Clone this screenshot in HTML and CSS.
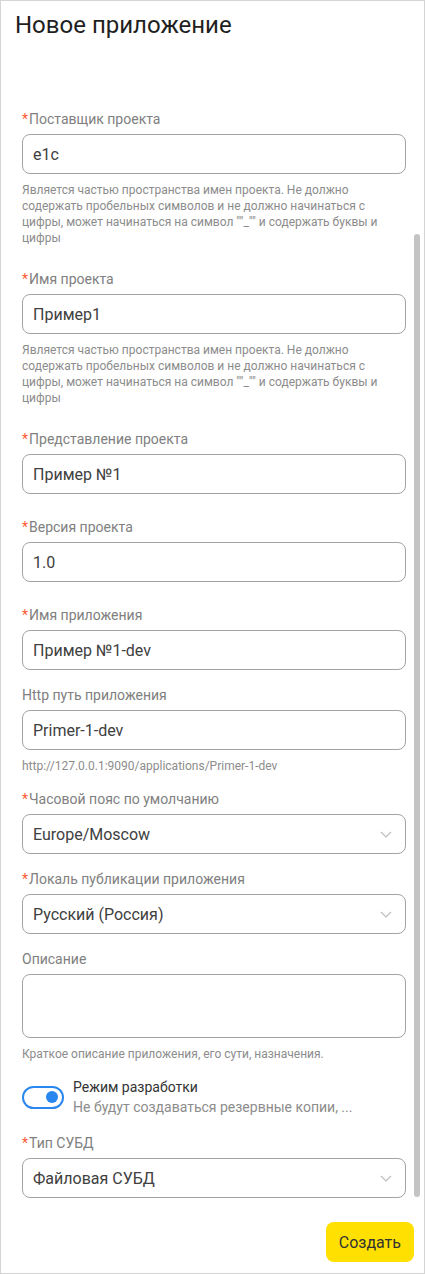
FILE: index.html
```html
<!DOCTYPE html>
<html lang="ru">
<head>
<meta charset="utf-8">
<title>Новое приложение</title>
<link rel="stylesheet" href="styles.css">
</head>
<body>
<div class="dialog">
  <h1 class="title">Новое приложение</h1>
  <div class="main">
    <form class="form">
      <div class="field">
        <div class="label"><span class="req">*</span>Поставщик проекта</div>
        <div class="input">e1c</div>
        <div class="help">Является частью пространства имен проекта. Не должно содержать пробельных символов и не должно начинаться с цифры, может начинаться на символ ""_"" и содержать буквы и цифры</div>
      </div>
      <div class="field">
        <div class="label"><span class="req">*</span>Имя проекта</div>
        <div class="input">Пример1</div>
        <div class="help">Является частью пространства имен проекта. Не должно содержать пробельных символов и не должно начинаться с цифры, может начинаться на символ ""_"" и содержать буквы и цифры</div>
      </div>
      <div class="field">
        <div class="label"><span class="req">*</span>Представление проекта</div>
        <div class="input">Пример №1</div>
      </div>
      <div class="field">
        <div class="label"><span class="req">*</span>Версия проекта</div>
        <div class="input">1.0</div>
      </div>
      <div class="field field--tight">
        <div class="label"><span class="req">*</span>Имя приложения</div>
        <div class="input">Пример №1-dev</div>
      </div>
      <div class="field field--tight">
        <div class="label">Http путь приложения</div>
        <div class="input">Primer-1-dev</div>
        <div class="help">http://127.0.0.1:9090/applications/Primer-1-dev</div>
      </div>
      <div class="field field--tight">
        <div class="label"><span class="req">*</span>Часовой пояс по умолчанию</div>
        <div class="input select"><span>Europe/Moscow</span><svg class="chev" width="12" height="7" viewBox="0 0 12 7"><path d="M1 1l5 5 5-5" fill="none" stroke="#bdbdbd" stroke-width="1.2"/></svg></div>
      </div>
      <div class="field field--tight">
        <div class="label"><span class="req">*</span>Локаль публикации приложения</div>
        <div class="input select"><span>Русский (Россия)</span><svg class="chev" width="12" height="7" viewBox="0 0 12 7"><path d="M1 1l5 5 5-5" fill="none" stroke="#bdbdbd" stroke-width="1.2"/></svg></div>
      </div>
      <div class="field field--tight">
        <div class="label">Описание</div>
        <div class="input textarea"></div>
        <div class="help">Краткое описание приложения, его сути, назначения.</div>
      </div>
      <div class="switch-row">
        <div class="switch"><span class="knob"></span></div>
        <div class="switch-text">
          <div class="switch-title">Режим разработки</div>
          <div class="switch-desc">Не будут создаваться резервные копии, ...</div>
        </div>
      </div>
      <div class="field field--last">
        <div class="label"><span class="req">*</span>Тип СУБД</div>
        <div class="input select"><span>Файловая СУБД</span><svg class="chev" width="12" height="7" viewBox="0 0 12 7"><path d="M1 1l5 5 5-5" fill="none" stroke="#bdbdbd" stroke-width="1.2"/></svg></div>
      </div>
    </form>
    <div class="scrollbar"><div class="thumb"></div></div>
  </div>
  <div class="footer">
    <button class="btn" type="button">Создать</button>
  </div>
</div>
</body>
</html>
```

FILE: styles.css
```css
* { box-sizing: border-box; }
html, body { margin: 0; padding: 0; background: #fff; }
body { font-family: Roboto, "Noto Sans", "Liberation Sans", sans-serif; }

.dialog {
  width: 425px;
  height: 1274px;
  border: 1px solid #d4d4d4;
  display: flex;
  flex-direction: column;
  background: #fff;
}

.title {
  margin: 0;
  padding: 10px 14px 0;
  font-size: 24px;
  line-height: 28px;
  font-weight: 400;
  color: #1f1f1f;
}

.main {
  display: flex;
  gap: 8px;
  padding: 0 4px 0 21px;
}

.form {
  flex: 1;
  min-width: 0;
  padding-top: 70px;
  display: flex;
  flex-direction: column;
}

.field { margin-bottom: 23px; }
.field--tight { margin-bottom: 15px; }
.field--last { margin-bottom: 0; }

.label {
  font-size: 14px;
  line-height: 20px;
  color: #808080;
  margin-bottom: 5px;
}
.req { color: #ff5a36; margin-right: 1px; }

.input {
  height: 40px;
  border: 1px solid #a3a3a3;
  border-radius: 8px;
  padding: 0 10px;
  display: flex;
  align-items: center;
  font-size: 16px;
  color: #404040;
}
.textarea { height: 64px; }
.select { justify-content: space-between; padding-right: 13px; }
.chev { flex: none; }

.help {
  margin-top: 8px;
  font-size: 12px;
  line-height: 16px;
  color: #8c8c8c;
}

.switch-row {
  display: flex;
  align-items: center;
  gap: 9px;
  margin-bottom: 16px;
}
.switch {
  width: 42px;
  height: 23px;
  border: 2.5px solid #2b87f0;
  border-radius: 12px;
  display: flex;
  align-items: center;
  justify-content: flex-end;
  padding-right: 4px;
  flex: none;
}
.knob {
  width: 12px;
  height: 12px;
  border-radius: 50%;
  background: #2b87f0;
}
.switch-text { font-size: 14px; line-height: 20px; }
.switch-title { color: #333; }
.switch-desc { color: #8c8c8c; }

.scrollbar {
  width: 6px;
  flex: none;
  padding-top: 195px;
}
.thumb {
  height: 963px;
  border-radius: 3px;
  background: #c4c4c4;
}

.footer {
  margin-top: auto;
  display: flex;
  justify-content: flex-end;
  padding: 0 10px 11px;
}
.btn {
  height: 40px;
  border: none;
  border-radius: 8px;
  background: #ffe000;
  color: #333;
  font-family: inherit;
  font-size: 16px;
  padding: 0 13px;
}
```
